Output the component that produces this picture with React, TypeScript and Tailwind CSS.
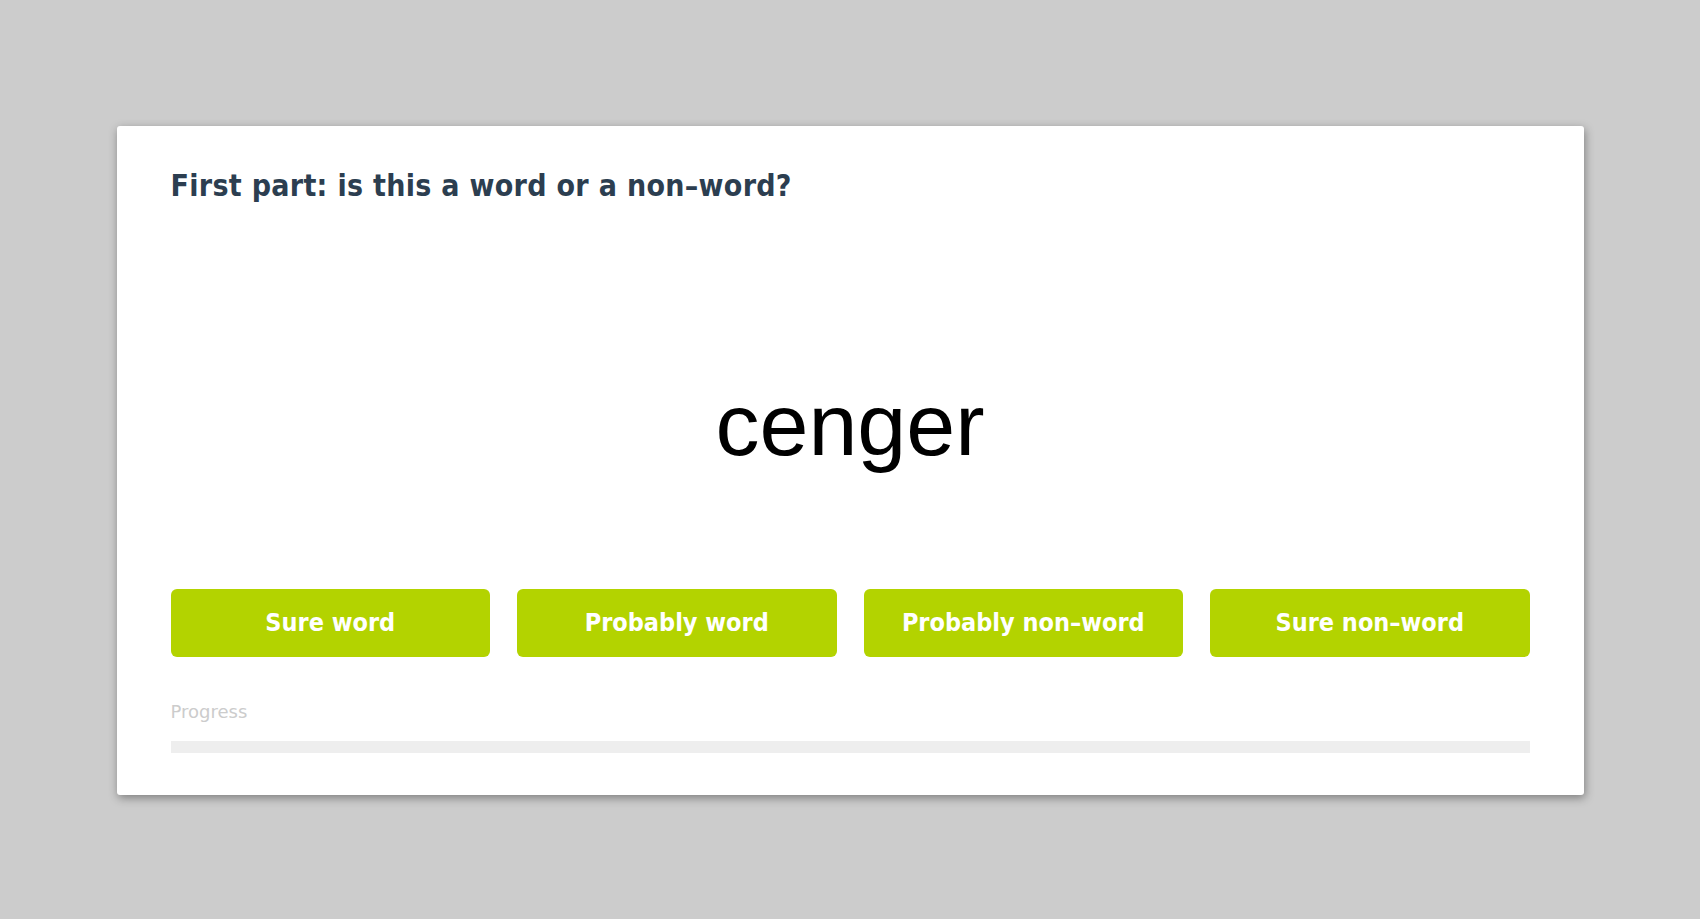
const choices = ["Sure word", "Probably word", "Probably non–word", "Sure non–word"];

export default function App() {
  return (
    <div className="min-h-screen bg-[#cccccc] flex items-start justify-center pt-[126px] font-['DejaVu_Sans_Condensed','DejaVu_Sans',sans-serif]">
      <div className="w-[1467px] bg-white rounded-[3px] shadow-[1px_3px_10px_rgba(0,0,0,0.38)] px-[54px] pt-[42px] pb-[42px] flex flex-col">
        <h1 className="text-[30px] leading-[36px] tracking-[0.3px] font-bold text-[#2c3e50]">
          First part: is this a word or a non–word?
        </h1>

        <div className="mt-[177px] text-center text-[88px] leading-none text-black font-['Liberation_Sans',Arial,sans-serif]">
          cenger
        </div>

        <div className="mt-[120px] grid grid-cols-4 gap-[27px]">
          {choices.map((label) => (
            <button
              key={label}
              className="h-[68px] rounded-[6px] bg-[#b3d300] text-white text-[25px] font-bold"
            >
              {label}
            </button>
          ))}
        </div>

        <p className="mt-[43px] text-[18px] leading-[24px] text-[#cccccc] font-['DejaVu_Sans',sans-serif]">Progress</p>
        <div className="mt-[17px] h-[12px] bg-[#eeeeee]" />
      </div>
    </div>
  );
}
